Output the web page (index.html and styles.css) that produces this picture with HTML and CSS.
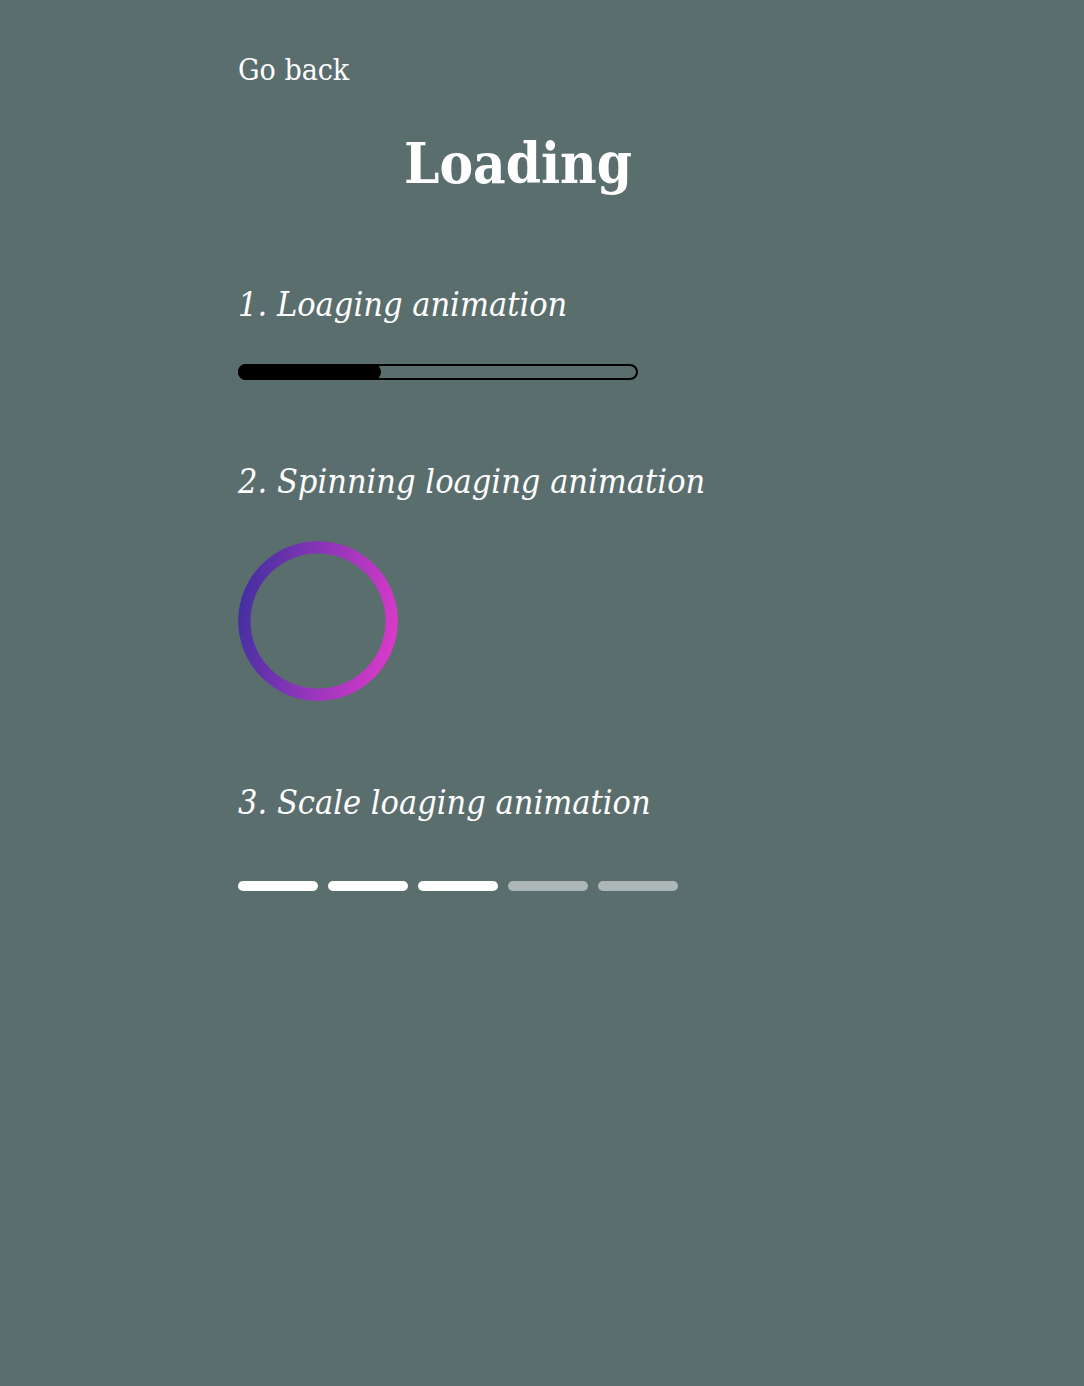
FILE: index.html
```html
<!DOCTYPE html>
<html lang="en">
<head>
<meta charset="utf-8">
<title>Loading</title>
<link rel="stylesheet" href="styles.css">
</head>
<body>
<main class="page">
  <a class="back" href="#">Go back</a>
  <h1 class="title">Loading</h1>

  <section class="demo demo-progress">
    <h2 class="demo-title">1. Loaging animation</h2>
    <div class="progress"><div class="progress-fill"></div></div>
  </section>

  <section class="demo demo-spin">
    <h2 class="demo-title">2. Spinning loaging animation</h2>
    <div class="spinner"></div>
  </section>

  <section class="demo demo-scale">
    <h2 class="demo-title">3. Scale loaging animation</h2>
    <div class="scale">
      <span class="scale-bar on"></span>
      <span class="scale-bar on"></span>
      <span class="scale-bar on"></span>
      <span class="scale-bar"></span>
      <span class="scale-bar"></span>
    </div>
  </section>
</main>
</body>
</html>
```
FILE: styles.css
```css
html, body {
  margin: 0;
  padding: 0;
}
body {
  background: #5a6e6e;
  color: #fff;
  font-family: "DejaVu Serif", "Liberation Serif", serif;
  font-stretch: semi-condensed;
  min-height: 1386px;
}
.page {
  width: 560px;
  margin: 0 0 0 238px;
  padding-top: 50px;
  display: flex;
  flex-direction: column;
}
.back {
  color: #fff;
  text-decoration: none;
  font-size: 30px;
  line-height: 40px;
  align-self: flex-start;
}
.title {
  margin: 38px 0 0;
  text-align: center;
  font-size: 56px;
  line-height: 70px;
  font-weight: 600;
}
.demo-title {
  margin: 0;
  font-style: italic;
  font-weight: 400;
  font-size: 34px;
  line-height: 44px;
}
.demo-progress { margin-top: 84px; }
.demo-spin { margin-top: 79px; }
.demo-scale { margin-top: 79px; }
.progress {
  margin-top: 38px;
  width: 400px;
  height: 16px;
  box-sizing: border-box;
  border: 2px solid #000;
  border-radius: 8px;
  position: relative;
}
.progress-fill {
  width: 143px;
  height: 16px;
  margin: -2px 0 0 -2px;
  background: #000;
  border-radius: 8px;
}
.spinner {
  margin-top: 38px;
  width: 160px;
  height: 160px;
  border-radius: 50%;
  background: linear-gradient(100deg, #372f9c 0%, #8a35b8 45%, #e53acb 100%);
  -webkit-mask: radial-gradient(circle, transparent 67px, #000 68px);
  mask: radial-gradient(circle, transparent 67px, #000 68px);
}
.scale {
  margin-top: 57px;
  display: flex;
  gap: 10px;
}
.scale-bar {
  width: 80px;
  height: 10px;
  border-radius: 5px;
  background: rgba(255, 255, 255, 0.5);
}
.scale-bar.on {
  background: #fff;
}
```
